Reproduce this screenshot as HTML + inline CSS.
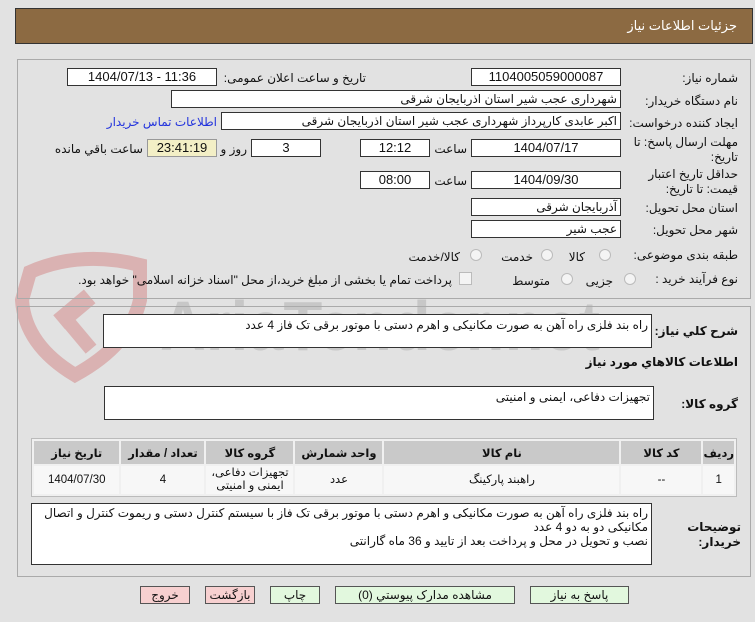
<!DOCTYPE html>
<html><head><meta charset="utf-8"><style>
*{box-sizing:border-box;margin:0;padding:0}
body{width:755px;height:622px;background:#e2e2e2;font-family:"Liberation Sans","DejaVu Sans",sans-serif;font-size:12px;color:#111;position:relative;overflow:hidden}
.a{position:absolute;white-space:nowrap}
.in{position:absolute;background:#fff;border:1px solid #333;height:18px;line-height:16px;text-align:center;font-size:13px}
.r{text-align:right;padding-right:3px;font-size:12px}
.lb{position:absolute;white-space:nowrap;direction:rtl;text-align:right}
.panel{position:absolute;border:1px solid #aaa;left:17px;width:734px}
.rad{position:absolute;width:12px;height:12px;border-radius:50%;border:1px solid #bbb;background:#f4f4f4}
.btn{position:absolute;top:586px;height:18px;border:1px solid #555;text-align:center;line-height:16px;font-size:12px}
table{position:absolute;left:31px;top:438px;width:706px;border-collapse:separate;border-spacing:2px;background:#f0f0f0;border:1px solid #bbb}
th{background:#c9c9c9;height:23px;font-size:11.5px;font-weight:bold}
td{background:#f7f7f7;height:28px;text-align:center;font-size:11.5px;line-height:13px}
</style></head><body>
<svg class="a" style="left:0;top:0" width="755" height="622">
<g opacity="0.25">
<path d="M30 272 Q80 250 140 265 L140 300 Q130 345 75 375 Q25 345 22 300 Z" fill="none" stroke="#c02020" stroke-width="14"/>
<rect x="55" y="300" width="40" height="18" fill="#c02020" transform="rotate(-40 75 310)"/>
<rect x="68" y="315" width="14" height="40" fill="#c02020" transform="rotate(-40 75 330)"/>
<text x="160" y="350" font-family="Liberation Sans" font-weight="bold" font-size="70" textLength="440" lengthAdjust="spacingAndGlyphs" fill="#777">AriaTender.net</text>
</g>
</svg>
<div class="a" style="left:15px;top:8px;width:738px;height:36px;background:#8c6a42;border:1px solid #333"></div>
<div class="lb" style="right:18px;top:18px;color:#fff;font-size:13px">جزئیات اطلاعات نیاز</div>

<div class="panel" style="top:59px;height:240px"></div>
<div class="panel" style="top:306px;height:271px"></div>

<div class="lb" style="right:17px;top:71px">شماره نیاز:</div>
<div class="in" style="left:471px;top:68px;width:150px">1104005059000087</div>
<div class="lb" style="right:389px;top:71px">تاریخ و ساعت اعلان عمومی:</div>
<div class="in" style="left:67px;top:68px;width:150px">1404/07/13 - 11:36</div>

<div class="lb" style="right:17px;top:94px">نام دستگاه خریدار:</div>
<div class="in r" style="left:171px;top:90px;width:450px">شهرداری عجب شیر استان اذربایجان شرقی</div>

<div class="lb" style="right:17px;top:116px">ایجاد کننده درخواست:</div>
<div class="in r" style="left:221px;top:112px;width:400px">اکبر عابدی کارپرداز شهرداری عجب شیر استان اذربایجان شرقی</div>
<div class="lb" style="right:538px;top:115px;color:#2233dd">اطلاعات تماس خریدار</div>

<div class="lb" style="right:17px;top:135px;line-height:15px">مهلت ارسال پاسخ: تا<br>تاریخ:</div>
<div class="in" style="left:471px;top:139px;width:150px">1404/07/17</div>
<div class="lb" style="right:288px;top:142px">ساعت</div>
<div class="in" style="left:360px;top:139px;width:70px">12:12</div>
<div class="in" style="left:251px;top:139px;width:70px">3</div>
<div class="lb" style="right:508px;top:142px">روز و</div>
<div class="in" style="left:147px;top:139px;width:70px;background:#f3efc6;border-color:#999">23:41:19</div>
<div class="lb" style="right:612px;top:142px">ساعت باقي مانده</div>

<div class="lb" style="right:17px;top:167px;line-height:15px">حداقل تاریخ اعتبار<br>قیمت: تا تاریخ:</div>
<div class="in" style="left:471px;top:171px;width:150px">1404/09/30</div>
<div class="lb" style="right:288px;top:174px">ساعت</div>
<div class="in" style="left:360px;top:171px;width:70px">08:00</div>

<div class="lb" style="right:17px;top:201px">استان محل تحویل:</div>
<div class="in r" style="left:471px;top:198px;width:150px">آذربایجان شرقی</div>
<div class="lb" style="right:17px;top:223px">شهر محل تحویل:</div>
<div class="in r" style="left:471px;top:220px;width:150px">عجب شیر</div>

<div class="lb" style="right:17px;top:248px">طبقه بندی موضوعی:</div>
<div class="rad" style="left:599px;top:249px"></div><div class="lb" style="right:170px;top:250px">کالا</div>
<div class="rad" style="left:541px;top:249px"></div><div class="lb" style="right:222px;top:250px">خدمت</div>
<div class="rad" style="left:470px;top:249px"></div><div class="lb" style="right:295px;top:250px">کالا/خدمت</div>

<div class="lb" style="right:17px;top:272px">نوع فرآیند خرید :</div>
<div class="rad" style="left:624px;top:273px"></div><div class="lb" style="right:142px;top:274px">جزیی</div>
<div class="rad" style="left:561px;top:273px"></div><div class="lb" style="right:205px;top:274px">متوسط</div>
<div class="a" style="left:459px;top:272px;width:13px;height:13px;border:1px solid #bbb;background:#f4f4f4"></div>
<div class="lb" style="right:303px;top:273px">پرداخت تمام یا بخشی از مبلغ خرید،از محل "اسناد خزانه اسلامی" خواهد بود.</div>

<div class="lb" style="right:17px;top:324px;font-weight:bold">شرح کلي نیاز:</div>
<div class="in r" style="left:103px;top:314px;width:549px;height:34px;text-align:right;line-height:20px">راه بند فلزی راه آهن به صورت مکانیکی و اهرم دستی با موتور برقی تک فاز  4 عدد</div>
<div class="lb" style="right:17px;top:355px;font-weight:bold">اطلاعات کالاهاي مورد نیاز</div>
<div class="lb" style="right:17px;top:397px;font-weight:bold">گروه کالا:</div>
<div class="in r" style="left:104px;top:386px;width:550px;height:34px;text-align:right;line-height:20px">تجهیزات دفاعی، ایمنی و امنیتی</div>

<table dir="rtl">
<tr><th style="width:27px">ردیف</th><th style="width:80px">کد کالا</th><th style="width:235px">نام کالا</th><th style="width:87px">واحد شمارش</th><th style="width:87px">گروه کالا</th><th style="width:83px">تعداد / مقدار</th><th>تاریخ نیاز</th></tr>
<tr><td>1</td><td>--</td><td>راهبند پارکینگ</td><td>عدد</td><td>تجهیزات دفاعی،<br>ایمنی و امنیتی</td><td>4</td><td>1404/07/30</td></tr>
</table>

<div class="lb" style="right:14px;top:520px;font-weight:bold;line-height:15px">توضیحات<br>خریدار:</div>
<div class="in" style="left:31px;top:503px;width:621px;height:62px;text-align:right;direction:rtl;padding:2px 3px;line-height:14px;white-space:normal;font-size:12px">راه بند فلزی راه آهن به صورت مکانیکی و اهرم دستی با موتور برقی تک فاز  با سیستم کنترل دستی و ریموت کنترل و اتصال مکانیکی دو به دو   4 عدد<br>نصب و تحویل در محل و پرداخت بعد از تایید و 36 ماه گارانتی</div>

<div class="btn" style="left:140px;width:50px;background:#f7d0d0">خروج</div>
<div class="btn" style="left:205px;width:50px;background:#f7d0d0">بازگشت</div>
<div class="btn" style="left:270px;width:50px;background:#e2f8de">چاپ</div>
<div class="btn" style="left:335px;width:180px;background:#e2f8de">مشاهده مدارک پیوستي (0)</div>
<div class="btn" style="left:530px;width:99px;background:#e2f8de">پاسخ به نیاز</div>
</body></html>
